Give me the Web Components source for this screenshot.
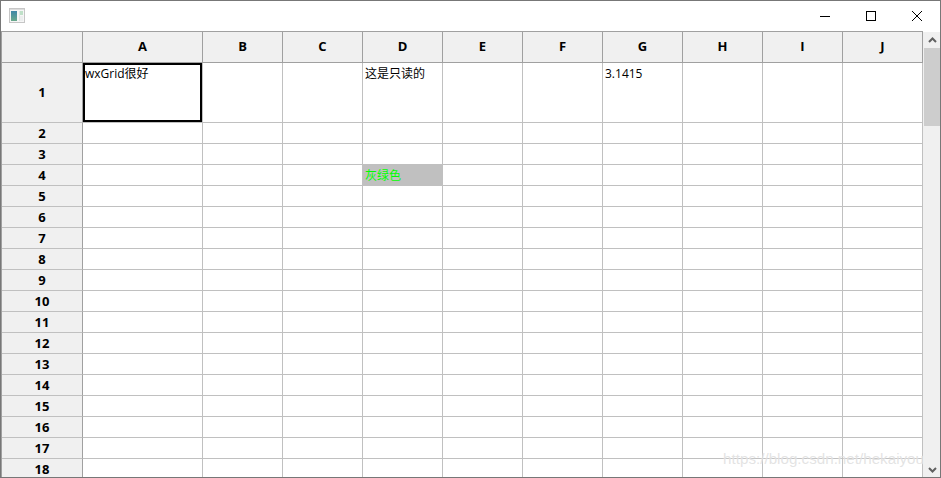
<!DOCTYPE html>
<html>
<head>
<meta charset="utf-8">
<title>wxGrid</title>
<style>
    html, body { margin: 0; padding: 0; background: #fff; }
</style>
</head>
<body>
<app-window>
    <title-bar slot="title"></title-bar>
    <data-grid></data-grid>
    <scroll-bar></scroll-bar>
    <water-mark>https://blog.csdn.net/hekaiyou</water-mark>
</app-window>

<script>
class AppWindow extends HTMLElement {
    constructor() {
        super();
        this.shadow = this.attachShadow({mode: "open"});
        this.shadow.innerHTML = `
        <style>
            :host {
                display: block;
                position: relative;
                box-sizing: border-box;
                width: 941px;
                height: 478px;
                border: 1px solid #777;
                overflow: hidden;
                background: #fff;
                font-family: "Open Sans", "Noto Sans CJK SC", sans-serif;
                font-size: 12px;
                color: #000;
            }
            .body {
                display: flex;
                height: 447px;
                overflow: hidden;
            }
        </style>
        <slot name="title"></slot>
        <div class="body"><slot></slot></div>
        `;
    }
}

class TitleBar extends HTMLElement {
    constructor() {
        super();
        this.shadow = this.attachShadow({mode: "open"});
        this.shadow.innerHTML = `
        <style>
            :host {
                display: flex;
                align-items: center;
                justify-content: space-between;
                height: 30px;
                background: #fff;
            }
            .icon { display: block; margin-left: 8px; }
            .controls { display: flex; }
            .btn {
                width: 46px;
                height: 30px;
                display: flex;
                align-items: center;
                justify-content: center;
            }
            svg { display: block; }
        </style>
        <svg class="icon" width="16" height="16" viewBox="0 0 16 16">
            <defs>
                <linearGradient id="pane" x1="0" y1="0" x2="0" y2="1">
                    <stop offset="0" stop-color="#3f86a8"/>
                    <stop offset="1" stop-color="#6aa98c"/>
                </linearGradient>
            </defs>
            <rect x="0.5" y="0.5" width="15" height="14" fill="#f6f6f6" stroke="#c6c6c6"/>
            <rect x="1" y="1" width="14" height="1" fill="#dcdcdc"/>
            <rect x="2" y="3" width="6" height="10" fill="url(#pane)"/>
            <rect x="10" y="3" width="1" height="10" fill="#dfe7e4"/>
            <rect x="11" y="3" width="3" height="4" fill="#bfe0c8"/>
            <rect x="11" y="8" width="3" height="5" fill="#eceeee"/>
        </svg>
        <div class="controls">
            <div class="btn"><svg width="10" height="10" viewBox="0 0 10 10"><path d="M0 5.5H10" stroke="#000" fill="none"/></svg></div>
            <div class="btn"><svg width="10" height="10" viewBox="0 0 10 10"><rect x="0.5" y="0.5" width="9" height="9" stroke="#000" fill="none"/></svg></div>
            <div class="btn"><svg width="10" height="10" viewBox="0 0 10 10"><path d="M0 0L10 10M10 0L0 10" stroke="#000" stroke-width="1" fill="none"/></svg></div>
        </div>
        `;
    }
}

class GridCell extends HTMLElement {
    constructor() {
        super();
        this.shadow = this.attachShadow({mode: "open"});
        this.shadow.innerHTML = `
        <style>
            :host {
                display: block;
                box-sizing: border-box;
                border-right: 1px solid #c0c0c0;
                border-bottom: 1px solid #c0c0c0;
                padding: 1px 2px 0;
                line-height: 20px;
                white-space: nowrap;
                overflow: hidden;
                background: #fff;
            }
            :host([head]) {
                display: flex;
                align-items: center;
                justify-content: center;
                padding: 0 2px 2px;
                background: #f0f0f0;
                border-color: #a0a0a0;
                font-size: 13px;
                font-weight: 700;
            }
            :host([rowhead]) { border-right-color: #a0a0a0; border-bottom-color: #c0c0c0; padding-bottom: 0; }
            :host([first]) { padding-bottom: 2px; }
            :host([selected]) { box-shadow: inset 0 0 0 2px #000; }
            :host([gray]) { background: #c0c0c0; color: #00ff00; }
        </style>
        <slot></slot>
        `;
    }
}

class DataGrid extends HTMLElement {
    constructor() {
        super();
        this.shadow = this.attachShadow({mode: "open"});
        this.shadow.innerHTML = `
        <style>
            :host {
                display: block;
                flex: none;
                width: 922px;
                overflow: hidden;
            }
            .sheet {
                display: grid;
                grid-template-columns: 81px 120px repeat(9, 80px);
                grid-template-rows: 31px 60px repeat(17, 21px);
                border-top: 1px solid #a0a0a0;
                border-left: 1px solid #a0a0a0;
            }
        </style>
        <div class="sheet"></div>
        `;
        this.fill();
    }

    fill() {
        const sheet = this.shadow.querySelector('.sheet');
        const cols = 'ABCDEFGHIJ'.split('');
        const values = {
            '1A': {text: 'wxGrid很好', attr: 'selected'},
            '1D': {text: '这是只读的'},
            '1G': {text: '3.1415'},
            '4D': {text: '灰绿色', attr: 'gray'}
        };
        const add = (text, attrs) => {
            const cell = document.createElement('grid-cell');
            attrs.forEach(a => cell.setAttribute(a, ''));
            cell.textContent = text;
            sheet.appendChild(cell);
        };
        add('', ['head']);
        cols.forEach(c => add(c, ['head']));
        for (let r = 1; r <= 18; r++) {
            add(String(r), r === 1 ? ['head', 'rowhead', 'first'] : ['head', 'rowhead']);
            cols.forEach(c => {
                const v = values[r + c];
                add(v ? v.text : '', v && v.attr ? [v.attr] : []);
            });
        }
    }
}

class ScrollBar extends HTMLElement {
    constructor() {
        super();
        this.shadow = this.attachShadow({mode: "open"});
        this.shadow.innerHTML = `
        <style>
            :host {
                display: flex;
                flex-direction: column;
                flex: none;
                box-sizing: border-box;
                width: 17px;
                height: 446px;
                margin-top: 1px;
                padding-left: 1px;
                background: #f0f0f0;
            }
            .arrow {
                flex: none;
                height: 16px;
                display: flex;
                align-items: center;
                justify-content: center;
            }
            .thumb { flex: none; height: 78px; background: #cdcdcd; }
            .track { flex: 1; }
            svg { display: block; }
        </style>
        <div class="arrow"><svg width="9" height="6" viewBox="0 0 9 6"><path d="M1 5L4.5 1.5L8 5" stroke="#606060" stroke-width="2" fill="none"/></svg></div>
        <div class="thumb"></div>
        <div class="track"></div>
        <div class="arrow"><svg width="9" height="6" viewBox="0 0 9 6"><path d="M1 1L4.5 4.5L8 1" stroke="#606060" stroke-width="2" fill="none"/></svg></div>
        `;
    }
}

class WaterMark extends HTMLElement {
    constructor() {
        super();
        this.shadow = this.attachShadow({mode: "open"});
        this.shadow.innerHTML = `
        <style>
            :host {
                position: absolute;
                right: 16px;
                bottom: 8px;
                font-family: "Liberation Sans", sans-serif;
                font-size: 15.2px;
                line-height: 20px;
                color: rgba(200, 200, 200, 0.5);
                text-shadow: 0 0 1px rgba(255, 255, 255, 0.9);
                pointer-events: none;
            }
        </style>
        <slot></slot>
        `;
    }
}

customElements.define('app-window', AppWindow);
customElements.define('title-bar', TitleBar);
customElements.define('grid-cell', GridCell);
customElements.define('data-grid', DataGrid);
customElements.define('scroll-bar', ScrollBar);
customElements.define('water-mark', WaterMark);
</script>
</body>
</html>
